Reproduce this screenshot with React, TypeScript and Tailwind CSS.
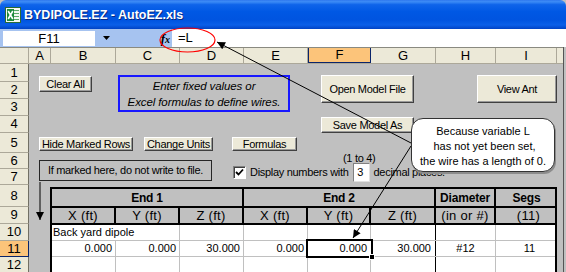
import React from "react";

const btn =
  "flex items-center justify-center whitespace-nowrap bg-[#ece9d8] border border-t-white border-l-white border-r-[#404040] border-b-[#404040] shadow-[inset_-1px_-1px_0_#9a9a9a] text-[11px] tracking-[-0.3px]";

function ExcelIcon() {
  return (
    <svg width="16" height="16" viewBox="0 0 16 16">
      <rect x="0.5" y="0.5" width="15" height="15" fill="#f4f8f2" stroke="#2b6b35" />
      <path d="M9 3.5h5M9 6.5h5M9 9.5h5M9 12.5h5" stroke="#5aa866" strokeWidth="1" />
      <rect x="2" y="2" width="7" height="12" fill="#1e8a3a" />
      <path d="M3.2 4 L7.8 12 M7.8 4 L3.2 12" stroke="#ffffff" strokeWidth="1.6" />
    </svg>
  );
}

const cols = [
  { l: "A", c: "w-[22px]" },
  { l: "B", c: "w-[65px]" },
  { l: "C", c: "w-[64px]" },
  { l: "D", c: "w-[64px]" },
  { l: "E", c: "w-[64px]" },
  { l: "F", c: "w-[63px]", sel: true },
  { l: "G", c: "w-[65px]" },
  { l: "H", c: "w-[60px]" },
  { l: "I", c: "w-[61px]" },
];

const rows = [
  { n: "1", h: "h-[18px]" },
  { n: "2", h: "h-[17px]" },
  { n: "3", h: "h-[17px]" },
  { n: "4", h: "h-[17px]" },
  { n: "5", h: "h-[20px]" },
  { n: "6", h: "h-[16px]" },
  { n: "7", h: "h-[16px]" },
  { n: "8", h: "h-[22px]" },
  { n: "9", h: "h-[17px]" },
  { n: "10", h: "h-[17px]" },
  { n: "11", h: "h-[16px]", sel: true },
  { n: "12", h: "h-[17px]" },
];

export default function App() {
  return (
    <div className="relative h-[272px] w-[566px] overflow-hidden bg-[#c0c0c0] font-['Liberation_Sans',Arial,sans-serif] text-black">
      {/* Title bar */}
      <div className="flex h-[29px] items-center rounded-t-[6px] bg-[linear-gradient(180deg,#2f78ee_0%,#3d8cf6_6%,#0f64ea_16%,#0058e4_40%,#0054e0_70%,#0a5fe8_86%,#0042c4_100%)] pl-[5px]">
        <ExcelIcon />
        <span className="ml-[3px] pt-[2px] text-[12.5px] font-bold text-white [text-shadow:1px_1px_0_#0a2a80]">
          BYDIPOLE.EZ - AutoEZ.xls
        </span>
      </div>

      {/* Formula bar */}
      <div className="flex h-[18px] bg-[#a6c3f0]">
        <div className="ml-[3px] mt-[2px] flex h-[15px] w-[92px] items-center justify-center bg-white text-[13px] leading-none">
          F11
        </div>
        <div className="flex w-[77px] items-center">
          <svg className="ml-[8px]" width="7" height="4" viewBox="0 0 7 4">
            <path d="M0 0 L7 0 L3.5 4 z" fill="#000" />
          </svg>
          <span className="ml-auto mr-[2px] font-['Liberation_Serif',serif] text-[13px] font-bold italic leading-none">
            f<span className="text-[10px]">x</span>
          </span>
        </div>
        <div className="flex flex-1 items-center bg-white pl-[6px] text-[13px]">=L</div>
      </div>

      {/* Sheet */}
      <div className="w-[564px] border-r border-[#555]">
        {/* Column headers */}
        <div className="flex h-[17px] border-y border-t-[#8a8a80] border-b-[#aca899] bg-[#ece9d8] text-[13px]">
          <div className="w-[29px] border-r border-[#aca899]" />
          {cols.map((c) =>
            c.sel ? (
              <div
                key={c.l}
                className={`${c.c} flex items-center justify-center border-x border-b border-[#0a246a] bg-[#fcc47a]`}
              >
                {c.l}
              </div>
            ) : (
              <div key={c.l} className={`${c.c} flex items-center justify-center border-r border-[#aca899]`}>
                {c.l}
              </div>
            )
          )}
          <div className="flex-1" />
        </div>

        {/* Body */}
        <div className="flex">
          {/* Row headers */}
          <div className="flex w-[29px] flex-col text-[13px]">
            {rows.map((r) =>
              r.sel ? (
                <div
                  key={r.n}
                  className={`${r.h} flex items-center justify-center border-b border-r border-[#0a246a] bg-[#fcc47a]`}
                >
                  {r.n}
                </div>
              ) : (
                <div
                  key={r.n}
                  className={`${r.h} flex items-center justify-center border-b border-r border-b-[#aca899] border-r-[#716f64] bg-[#ece9d8]`}
                >
                  {r.n}
                </div>
              )
            )}
          </div>

          {/* Cells */}
          <div className="flex flex-1 flex-col">
            {/* Controls area: rows 1-7 */}
            <div className="flex h-[121px] flex-col">
              <div className="mt-[11px] flex h-[37px] items-start">
                <div className={`${btn} ml-[10px] mt-[1px] h-[16px] w-[53px]`}>Clear All</div>
                <div className="ml-[26px] flex h-[37px] w-[172px] flex-col items-center justify-center whitespace-nowrap border-2 border-[#1818ff] text-[11.5px] italic leading-[16px] tracking-[-0.1px]">
                  <span>Enter fixed values or</span>
                  <span>Excel formulas to define wires.</span>
                </div>
                <div className={`${btn} ml-[31px] h-[28px] w-[93px]`}>Open Model File</div>
                <div className={`${btn} ml-[63px] h-[28px] w-[80px]`}>View Ant</div>
              </div>

              <div className={`${btn} ml-[292px] mt-[5px] h-[16px] w-[93px]`}>Save Model As</div>

              <div className="mt-[4px] flex h-[14px]">
                <div className={`${btn} ml-[10px] h-[14px] w-[94px]`}>Hide Marked Rows</div>
                <div className={`${btn} ml-[11px] h-[14px] w-[69px]`}>Change Units</div>
                <div className={`${btn} ml-[19px] h-[14px] w-[65px]`}>Formulas</div>
              </div>

              <div className="flex items-start text-[11px] tracking-[-0.3px]">
                <div className="ml-[10px] mt-[9px] flex h-[21px] w-[173px] items-center justify-center whitespace-nowrap border border-[#262626]">
                  If marked here, do not write to file.
                </div>
                <div className="ml-[21px] flex flex-col">
                  <div className="mt-[2px] h-[10px] pl-[110px] leading-[10px]">(1 to 4)</div>
                  <div className="flex h-[19px] items-center whitespace-nowrap">
                    <div className="flex h-[13px] w-[13px] items-center justify-center border border-b-white border-l-[#808080] border-r-white border-t-[#808080] bg-white shadow-[inset_1px_1px_0_#404040]">
                      <svg width="9" height="9" viewBox="0 0 9 9">
                        <path d="M1 4 L3.5 6.5 L8 1.5" fill="none" stroke="#000" strokeWidth="1.8" />
                      </svg>
                    </div>
                    <span className="ml-[4px]">Display numbers with</span>
                    <div className="ml-[4px] flex h-[19px] w-[17px] items-center justify-center border border-b-[#e0e0e0] border-l-[#808080] border-r-[#e0e0e0] border-t-[#808080] bg-white pr-[2px]">
                      3
                    </div>
                    <span className="ml-[4px]">decimal places.</span>
                  </div>
                </div>
              </div>
            </div>

            {/* Table: rows 8-12 */}
            <div className="flex">
              <div className="w-[21px]" />
              <div className="mt-[2px] w-[507px] border-2 border-black bg-white">
                <div className="flex h-[19px] border-b-2 border-black bg-[#c0c0c0] text-[12px] font-bold tracking-[-0.2px]">
                  <div className="flex w-[192px] items-center justify-center border-r-2 border-black">End 1</div>
                  <div className="flex w-[192px] items-center justify-center border-r-2 border-black">End 2</div>
                  <div className="flex w-[60px] items-center justify-center border-r-2 border-black">Diameter</div>
                  <div className="flex flex-1 items-center justify-center pl-[2px]">Segs</div>
                </div>
                <div className="flex h-[17px] border-b-2 border-black bg-[#c0c0c0] text-[13px] tracking-[0.3px]">
                  <div className="flex w-[64px] items-center justify-center border-r-2 border-black">X (ft)</div>
                  <div className="flex w-[64px] items-center justify-center border-r-2 border-black">Y (ft)</div>
                  <div className="flex w-[64px] items-center justify-center border-r-2 border-black">Z (ft)</div>
                  <div className="flex w-[64px] items-center justify-center border-r-2 border-black">X (ft)</div>
                  <div className="flex w-[63px] items-center justify-center border-r-2 border-black">Y (ft)</div>
                  <div className="flex w-[65px] items-center justify-center border-r-2 border-black">Z (ft)</div>
                  <div className="flex w-[60px] items-center justify-center border-r-2 border-black">(in or #)</div>
                  <div className="flex flex-1 items-center justify-center pl-[6px]">(11)</div>
                </div>
                <div className="flex h-[16px] border-b border-[#c0c0c0] text-[11px]">
                  <div className="flex w-[128px] items-center whitespace-nowrap border-r border-[#c0c0c0] pl-[1px]">
                    Back yard dipole
                  </div>
                  <div className="w-[64px] border-r border-[#c0c0c0]" />
                  <div className="w-[64px] border-r border-[#c0c0c0]" />
                  <div className="w-[63px] border-r border-[#c0c0c0]" />
                  <div className="w-[65px] border-r border-black" />
                  <div className="w-[60px] border-r border-[#c0c0c0]" />
                  <div className="flex-1" />
                </div>
                <div className="flex h-[16px] border-b border-[#c0c0c0] text-[11px]">
                  <div className="flex w-[64px] items-center justify-end border-r border-[#c0c0c0] pr-[3px]">0.000</div>
                  <div className="flex w-[64px] items-center justify-end border-r border-[#c0c0c0] pr-[3px]">0.000</div>
                  <div className="flex w-[64px] items-center justify-end border-r border-[#c0c0c0] pr-[3px]">30.000</div>
                  <div className="flex w-[64px] items-center justify-end border-r border-[#c0c0c0] pr-[3px]">0.000</div>
                  <div className="relative z-10 flex w-[63px] items-center justify-end pr-[4px] outline-2 outline-black">
                    0.000
                    <div className="absolute -bottom-[4px] -right-[4px] h-[6px] w-[6px] border border-white bg-black" />
                  </div>
                  <div className="flex w-[65px] items-center justify-end border-r border-black pr-[4px]">30.000</div>
                  <div className="flex w-[60px] items-center justify-center border-r border-[#c0c0c0]">#12</div>
                  <div className="flex flex-1 items-center justify-center pl-[8px]">11</div>
                </div>
                <div className="flex h-[20px]">
                  <div className="w-[64px] border-r border-[#c0c0c0]" />
                  <div className="w-[64px] border-r border-[#c0c0c0]" />
                  <div className="w-[64px] border-r border-[#c0c0c0]" />
                  <div className="w-[64px] border-r border-[#c0c0c0]" />
                  <div className="w-[63px] border-r border-[#c0c0c0]" />
                  <div className="w-[65px] border-r border-black" />
                  <div className="w-[60px] border-r border-[#c0c0c0]" />
                  <div className="flex-1" />
                </div>
              </div>
            </div>
          </div>
        </div>
      </div>

      {/* Annotation overlay: ellipse and arrows */}
      <svg className="pointer-events-none absolute left-0 top-0" width="566" height="272">
        <defs>
          <marker
            id="ah"
            viewBox="0 0 10 10"
            refX="10"
            refY="5"
            markerWidth="9"
            markerHeight="8"
            markerUnits="userSpaceOnUse"
            orient="auto"
          >
            <path d="M0 0 L10 5 L0 10 z" fill="#000" />
          </marker>
        </defs>
        <ellipse cx="187.5" cy="40" rx="27.5" ry="12" fill="none" stroke="#ff0000" strokeWidth="1.2" />
        <line x1="411" y1="143" x2="217" y2="42" stroke="#000" strokeWidth="1" markerEnd="url(#ah)" />
        <line x1="411" y1="146" x2="353" y2="238" stroke="#000" strokeWidth="1" markerEnd="url(#ah)" />
        <line x1="40" y1="182" x2="40" y2="220" stroke="#000" strokeWidth="1" markerEnd="url(#ah)" />
      </svg>

      {/* Callout bubble */}
      <div className="absolute left-[411px] top-[118px] flex h-[54px] w-[144px] flex-col items-center rounded-[12px] border border-[#333] bg-white pt-[5px] text-[11px] leading-[15px] shadow-[1px_2px_0_#8c8c8c]">
        <span>Because variable L</span>
        <span>&nbsp;has not yet been set,</span>
        <span>the wire has a length of 0.</span>
      </div>
    </div>
  );
}
